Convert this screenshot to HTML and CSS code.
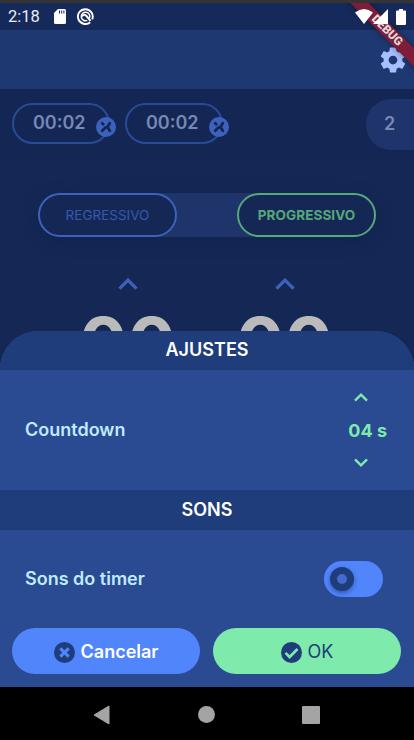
FILE: index.html
```html
<!DOCTYPE html>
<html lang="pt-BR">
<head>
  <meta charset="UTF-8">
  <title>Timer – Ajustes</title>
  <link rel="stylesheet" href="styles.css">
</head>
<body>
  <div class="phone">
    <div class="status-bar">
      <span class="clock">2:18</span>
      <svg class="sd" width="12" height="15" viewBox="0 0 12 15"><path d="M4 0h6.500a1.500 1.500 0 0 1 1.500 1.500v12a1.500 1.500 0 0 1-1.500 1.500h-9a1.500 1.500 0 0 1-1.500-1.500V4z" fill="#fff"/><path d="M5.500 1.500v3M7.700 1.500v3M9.900 1.500v3" stroke="#15295a" stroke-width="1"/></svg>
      <svg class="sync" width="17" height="17" viewBox="0 0 17 17" fill="none" stroke="#fff"><path d="M13.200 14.200a7.400 7.400 0 1 1 2-2.800" stroke-width="1.900"/><path d="M12.500 10.200a4.300 4.300 0 1 0-2.200 2.200" stroke-width="1.500"/><path d="M5 8.200q2.500-2.600 4.500-.2l4 4.800" stroke-width="2"/></svg>
      <div class="signals">
        <svg width="18" height="15" viewBox="0 0 18 15"><path d="M0 3.500Q9-3.500 18 3.500L9 15z" fill="#fff"/></svg>
        <svg width="15" height="15" viewBox="0 0 15 15"><path d="M15 0v15H0z" fill="#fff"/></svg>
        <svg width="10" height="16" viewBox="0 0 10 16"><path d="M3 0h4v1.500h2a1 1 0 0 1 1 1V15a1 1 0 0 1-1 1H1a1 1 0 0 1-1-1V2.500a1 1 0 0 1 1-1h2z" fill="#fff"/></svg>
      </div>
    </div>

    <div class="app-bar">
      <svg width="30" height="30" viewBox="0 0 24 24" fill="#a5bfff"><path d="M19.430 12.980c.04-.32.070-.64.070-.98s-.03-.66-.07-.98l2.110-1.650c.19-.15.240-.42.120-.64l-2-3.460c-.12-.22-.39-.3-.61-.22l-2.490 1c-.52-.4-1.080-.73-1.690-.98l-.38-2.650C14.460 2.180 14.250 2 14 2h-4c-.25 0-.46.180-.49.420l-.38 2.650c-.61.250-1.170.59-1.690.98l-2.490-1c-.23-.09-.49 0-.61.220l-2 3.460c-.13.220-.07.490.12.640l2.110 1.650c-.04.320-.07.650-.07.980s.03.660.070.980l-2.110 1.650c-.19.150-.24.420-.12.640l2 3.460c.12.220.39.300.61.220l2.490-1c.52.400 1.080.730 1.690.980l.38 2.650c.03.240.24.420.49.420h4c.25 0 .46-.18.490-.42l.38-2.650c.61-.25 1.170-.59 1.690-.98l2.490 1c.23.090.49 0 .61-.22l2-3.460c.12-.22.070-.49-.12-.64l-2.110-1.650zM12 15.500c-1.930 0-3.500-1.570-3.500-3.500s1.570-3.500 3.500-3.500 3.500 1.570 3.500 3.500-1.570 3.500-3.500 3.500z"/></svg>
    </div>

    <div class="laps">
      <div class="lap">00:02
        <svg class="remove" viewBox="0 0 20 20"><circle cx="10" cy="10" r="10" fill="#3c62bd"/><path d="M6.200 6.200l1 1M13.800 6.200l-2 3.200v1.200l2 3.200M6.200 13.800l3.300-3.400" fill="none" stroke="#132654" stroke-width="2.800" stroke-linecap="round"/></svg>
      </div>
      <div class="lap">00:02
        <svg class="remove" viewBox="0 0 20 20"><circle cx="10" cy="10" r="10" fill="#3c62bd"/><path d="M6.200 6.200l1 1M13.800 6.200l-2 3.200v1.200l2 3.200M6.200 13.800l3.300-3.400" fill="none" stroke="#132654" stroke-width="2.800" stroke-linecap="round"/></svg>
      </div>
      <div class="lap-count">2</div>
    </div>

    <div class="mode">
      <div class="mode-option">REGRESSIVO</div>
      <div class="mode-option active">PROGRESSIVO</div>
    </div>

    <div class="digits">
      <div class="digit-group">
        <svg width="20" height="12" viewBox="0 0 20 12"><path d="M1.500 10.700L10 2.200l8.500 8.500" fill="none" stroke="#3c62bd" stroke-width="3.300"/></svg>
        <div class="number">00</div>
      </div>
      <div class="digit-group">
        <svg width="20" height="12" viewBox="0 0 20 12"><path d="M1.500 10.700L10 2.200l8.500 8.500" fill="none" stroke="#3c62bd" stroke-width="3.300"/></svg>
        <div class="number">00</div>
      </div>
    </div>

    <div class="sheet">
      <h2 class="section-title">AJUSTES</h2>
      <div class="countdown">
        <span class="label">Countdown</span>
        <div class="stepper">
          <svg width="14" height="9" viewBox="0 0 14 9"><path d="M1 7.700l6-6 6 6" fill="none" stroke="#7eeaab" stroke-width="2.400"/></svg>
          <span class="seconds">04 s</span>
          <svg width="14" height="9" viewBox="0 0 14 9"><path d="M1 1.300l6 6 6-6" fill="none" stroke="#7eeaab" stroke-width="2.400"/></svg>
        </div>
      </div>
      <h2 class="section-title sounds">SONS</h2>
      <div class="sound-row">
        <span class="label">Sons do timer</span>
        <div class="switch"><div class="knob"></div></div>
      </div>
      <div class="actions">
        <button class="cancel">
          <svg width="21" height="21" viewBox="0 0 20 20"><circle cx="10" cy="10" r="10" fill="#203d7b"/><path d="M6 6l8 8M14 6l-8 8" stroke="#5185fc" stroke-width="2.900"/></svg>
          <span>Cancelar</span>
        </button>
        <button class="ok">
          <svg width="21" height="21" viewBox="0 0 20 20"><circle cx="10" cy="10" r="10" fill="#203d7b"/><path d="M4.300 10.400l3.900 3.900 7.500-7.600" fill="none" stroke="#7eeaab" stroke-width="2.500"/></svg>
          <span>OK</span>
        </button>
      </div>
    </div>

    <div class="nav-bar">
      <svg width="17" height="20" viewBox="0 0 17 20"><path d="M16 1v18L1 10z" fill="#a4a4a4" stroke="#a4a4a4" stroke-linejoin="round"/></svg>
      <div class="home"></div>
      <div class="recent"></div>
    </div>

    <div class="debug-corner">
      <div class="debug">DEBUG</div>
    </div>
  </div>
</body>
</html>
```
FILE: styles.css
```css
* {
  box-sizing: border-box;
}

body {
  margin: 0;
  font-family: Inter, sans-serif;
}

.phone {
  position: relative;
  width: 414px;
  height: 740px;
  overflow: hidden;
  background-color: #152855;
  display: flex;
  flex-direction: column;
}

.status-bar {
  height: 30px;
  border-top: 3px solid #343434;
  background-color: #15295a;
  display: flex;
  align-items: center;
  padding: 0 8px;
  flex-shrink: 0;
}

.clock {
  font-family: Roboto, sans-serif;
  font-size: 16.500px;
  color: #e9ecf4;
  width: 46px;
}

.sync {
  margin-left: 11px;
}

.signals {
  position: relative;
  z-index: 3;
  display: flex;
  align-items: center;
  margin-left: auto;
}

.signals svg:nth-child(3) {
  margin-left: 8px;
}

.app-bar {
  height: 59px;
  background-color: #1e3872;
  display: flex;
  justify-content: flex-end;
  align-items: center;
  padding-right: 6px;
  flex-shrink: 0;
}

.laps {
  height: 71px;
  background-color: #132654;
  display: flex;
  align-items: flex-start;
  gap: 15px;
  padding: 14px 0 0 12px;
  flex-shrink: 0;
}

.lap {
  position: relative;
  width: 98px;
  height: 41px;
  border: 2px solid #294b97;
  border-radius: 21px;
  color: #7888b5;
  font-size: 18px;
  font-weight: 600;
  line-height: 36px;
  padding-left: 19px;
}

.remove {
  position: absolute;
  width: 20px;
  height: 20px;
  right: -8px;
  top: 12px;
}

.lap-count {
  width: 48px;
  height: 51px;
  margin: -4px 0 0 auto;
  border-radius: 25px 0 0 25px;
  background-color: #1e346b;
  color: #7888b5;
  font-size: 18px;
  font-weight: 600;
  line-height: 49px;
  padding-left: 18px;
}

.mode {
  width: 338px;
  height: 44px;
  margin: 33px 0 0 38px;
  border-radius: 22px;
  background-color: #1e346b;
  box-shadow: 0 4px 16px rgba(10, 30, 65, 0.4);
  display: flex;
  justify-content: space-between;
  flex-shrink: 0;
}

.mode-option {
  width: 139px;
  border: 2px solid #3c62bd;
  border-radius: 22px;
  background-color: #152855;
  color: #3558ad;
  font-size: 13.500px;
  letter-spacing: 0;
  line-height: 40px;
  text-align: center;
}

.mode-option.active {
  border-color: #55a879;
  color: #55a879;
  font-weight: 700;
  letter-spacing: 0.1px;
}

.digits {
  display: flex;
  padding: 41px 0 0 49px;
}

.digit-group {
  width: 157px;
  display: flex;
  flex-direction: column;
  align-items: center;
}

.number {
  height: 30px;
  overflow: hidden;
  margin-top: 13px;
  color: #bababa;
  font-size: 72px;
  font-weight: 700;
  line-height: 80px;
}

.sheet {
  position: absolute;
  left: 0;
  top: 331px;
  width: 414px;
  height: 356px;
  border-radius: 38px 38px 0 0;
  overflow: hidden;
  background-color: #2a4a92;
}

.section-title {
  height: 39px;
  margin: 0;
  background-color: #203d7b;
  color: #fff;
  font-size: 18px;
  font-weight: 600;
  line-height: 38px;
  text-align: center;
}

.section-title.sounds {
  height: 40px;
  line-height: 40px;
}

.countdown {
  height: 120px;
  display: flex;
  justify-content: space-between;
  align-items: center;
  padding: 0 27px 0 25px;
}

.label {
  color: #bfeaff;
  font-size: 18px;
  font-weight: 600;
  line-height: 24px;
}

.stepper {
  display: flex;
  flex-direction: column;
  align-items: flex-start;
}

.stepper svg {
  margin-left: 6px;
}

.seconds {
  color: #7eeaab;
  font-size: 18px;
  font-weight: 700;
  line-height: 24px;
  margin: 17px 0 15px;
}

.sound-row {
  height: 98px;
  display: flex;
  justify-content: space-between;
  align-items: center;
  padding: 0 31px 0 25px;
}

.switch {
  width: 59px;
  height: 36px;
  border-radius: 18px;
  background-color: #5185fc;
  padding: 6px;
}

.knob {
  width: 24px;
  height: 24px;
  border: 7px solid #203d7b;
  border-radius: 50%;
  background-color: #426bcb;
  box-shadow: 0 2px 4px rgba(20, 40, 90, 0.5);
}

.actions {
  display: flex;
  gap: 13px;
  padding: 0 12px;
}

.actions button {
  width: 188px;
  height: 46px;
  border: none;
  border-radius: 23px;
  display: flex;
  justify-content: center;
  align-items: center;
  gap: 6px;
  padding: 0;
  font-family: Inter, sans-serif;
  font-size: 18px;
}

.actions svg {
  margin-top: 3px;
}

.cancel {
  background-color: #5185fc;
  color: #fff;
  font-weight: 600;
}

.actions .ok {
  background-color: #7eeaab;
  color: #203d7b;
}

.nav-bar {
  position: absolute;
  left: 0;
  bottom: 0;
  width: 414px;
  height: 53px;
  background-color: #000;
  display: flex;
  align-items: center;
  padding: 2px 0 0 93px;
}

.home {
  width: 17px;
  height: 17px;
  margin-left: 88px;
  border-radius: 50%;
  background-color: #a4a4a4;
}

.recent {
  width: 18px;
  height: 18px;
  margin-left: 87px;
  border-radius: 1px;
  background-color: #a4a4a4;
}

.debug-corner {
  position: absolute;
  z-index: 2;
  top: 3px;
  right: 0;
  width: 90px;
  height: 90px;
  overflow: hidden;
}

.debug {
  position: absolute;
  left: 3px;
  top: 21px;
  width: 120px;
  height: 13px;
  background-color: #7e1d38;
  box-shadow: 0 0 6px rgba(0, 0, 0, 0.4);
  color: #e0d6dc;
  font-family: Roboto, sans-serif;
  font-size: 12px;
  font-weight: 900;
  line-height: 13px;
  text-align: center;
  transform: rotate(45deg);
}
```
